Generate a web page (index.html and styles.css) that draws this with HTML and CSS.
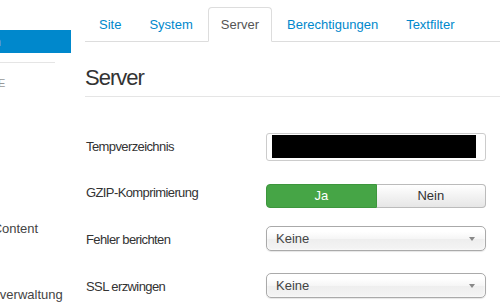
FILE: index.html
```html
<!DOCTYPE html>
<html lang="de">

<head>
    <meta charset="UTF-8">
    <meta name="viewport" content="width=device-width, initial-scale=1.0">
    <title>Konfiguration - Server</title>

    <link rel="stylesheet" href="styles.css">
</head>

<body>

    <div class="page">

        <aside class="sidebar">
            <ul class="side-nav">
                <li class="active">Konfiguration</li>
                <li class="divider"></li>
                <li class="nav-header">Komponente</li>
                <li>Banner</li>
                <li>Beiträge</li>
                <li>Benutzer</li>
                <li>Cache</li>
                <li>Check-in</li>
                <li>Multilingual Content</li>
                <li>Kontakte</li>
                <li>Medien</li>
                <li>Erweiterungsverwaltung</li>
            </ul>
        </aside>

        <main class="content">

            <ul class="tabs">
                <li><a href="#">Site</a></li>
                <li><a href="#">System</a></li>
                <li class="active"><a href="#">Server</a></li>
                <li><a href="#">Berechtigungen</a></li>
                <li><a href="#">Textfilter</a></li>
            </ul>

            <h2 class="section-title">Server</h2>

            <div class="form">
                <div class="control-group row-input">
                    <label class="control-label">Tempverzeichnis</label>
                    <div class="controls">
                        <div class="text-input"><span class="redacted"></span></div>
                    </div>
                </div>

                <div class="control-group row-toggle">
                    <label class="control-label">GZIP-Komprimierung</label>
                    <div class="controls">
                        <div class="btn-group">
                            <span class="btn btn-yes">Ja</span>
                            <span class="btn btn-no">Nein</span>
                        </div>
                    </div>
                </div>

                <div class="control-group row-select">
                    <label class="control-label">Fehler berichten</label>
                    <div class="controls">
                        <div class="select">Keine<span class="arrow"></span></div>
                    </div>
                </div>

                <div class="control-group">
                    <label class="control-label">SSL erzwingen</label>
                    <div class="controls">
                        <div class="select">Keine<span class="arrow"></span></div>
                    </div>
                </div>
            </div>

        </main>

    </div>

</body>

</html>
```

FILE: styles.css
```css
body {
    margin: 0;
    padding: 0;
    font-family: 'Liberation Sans', Arial, sans-serif;
    font-size: 13px;
    color: #333;
    background: #fff;
    overflow: hidden;
}

.page {
    display: flex;
}

/* Left menu, scrolled partly out of view */
.sidebar {
    width: 71px;
    flex-shrink: 0;
    overflow: hidden;
    padding-top: 30px;
}

.side-nav {
    list-style: none;
    margin: 0 0 0 -76px;
    padding: 0;
    width: 147px;
}

.side-nav li {
    line-height: 22px;
    color: #444;
    white-space: nowrap;
}

.side-nav .active {
    line-height: 23px;
    background-color: #0088cc;
    color: #fff;
}

.side-nav .divider {
    height: 1px;
    background-color: #e5e5e5;
    margin: 9px 16px 0 0;
}

.side-nav .nav-header {
    margin: 10px 0 15px;
    padding-left: 3px;
    line-height: 20px;
    font-size: 11px;
    text-transform: uppercase;
    color: #999;
}

/* Main column */
.content {
    flex: 1;
    min-width: 0;
    margin-left: 14px;
    padding-top: 7px;
}

.tabs {
    display: flex;
    list-style: none;
    margin: 0;
    padding: 0 0 0 1px;
    border-bottom: 1px solid #ddd;
}

.tabs li {
    margin-bottom: -1px;
}

.tabs a {
    display: block;
    padding: 8px 12px;
    margin-right: 2px;
    line-height: 17px;
    border: 1px solid transparent;
    border-radius: 4px 4px 0 0;
    color: #0088cc;
    text-decoration: none;
}

.tabs .active a {
    color: #555;
    background-color: #fff;
    border-color: #ddd #ddd transparent;
}

.section-title {
    margin: 21px 0 0;
    padding-bottom: 3px;
    font-size: 22px;
    font-weight: normal;
    line-height: 30px;
    letter-spacing: -1px;
    border-bottom: 1px solid #e5e5e5;
}

.form {
    margin-top: 36px;
}

.control-group {
    display: flex;
    align-items: flex-start;
    margin-bottom: 18px;
}

.row-input {
    margin-bottom: 23px;
}

.row-select {
    margin-bottom: 22px;
}

.control-label {
    width: 181px;
    flex-shrink: 0;
    box-sizing: border-box;
    padding: 5px 0 0 1px;
    line-height: 18px;
    letter-spacing: -0.6px;
}

.row-toggle .control-label {
    padding-top: 0;
}

.controls {
    width: 220px;
}

/* Text field (value blacked out) */
.text-input {
    height: 28px;
    box-sizing: border-box;
    padding: 1px 9px 2px 5px;
    border: 1px solid #ccc;
    border-radius: 3px;
    background: #fff;
}

.redacted {
    display: block;
    height: 23px;
    background-color: #000;
}

/* Yes / no switch */
.btn-group {
    display: flex;
}

.btn {
    flex: 1;
    height: 24px;
    box-sizing: border-box;
    line-height: 22px;
    text-align: center;
    border: 1px solid #bbb;
}

.btn-yes {
    background-color: #46a546;
    border-color: #3d963d;
    color: #fff;
    border-radius: 4px 0 0 4px;
}

.btn-no {
    background: linear-gradient(#fff, #e6e6e6);
    border-left: none;
    color: #333;
    border-radius: 0 4px 4px 0;
}

/* Dropdown */
.select {
    position: relative;
    height: 25px;
    box-sizing: border-box;
    padding-left: 9px;
    line-height: 23px;
    color: #444;
    border: 1px solid #aaa;
    border-radius: 5px;
    background: linear-gradient(#fff 20%, #f6f6f6 50%, #eee 52%, #f4f4f4 100%);
    box-shadow: inset 0 0 3px #fff, 0 1px 1px rgba(0, 0, 0, 0.1);
}

.arrow {
    position: absolute;
    right: 10px;
    top: 10px;
    border-left: 3px solid transparent;
    border-right: 3px solid transparent;
    border-top: 4px solid #888;
}
```
